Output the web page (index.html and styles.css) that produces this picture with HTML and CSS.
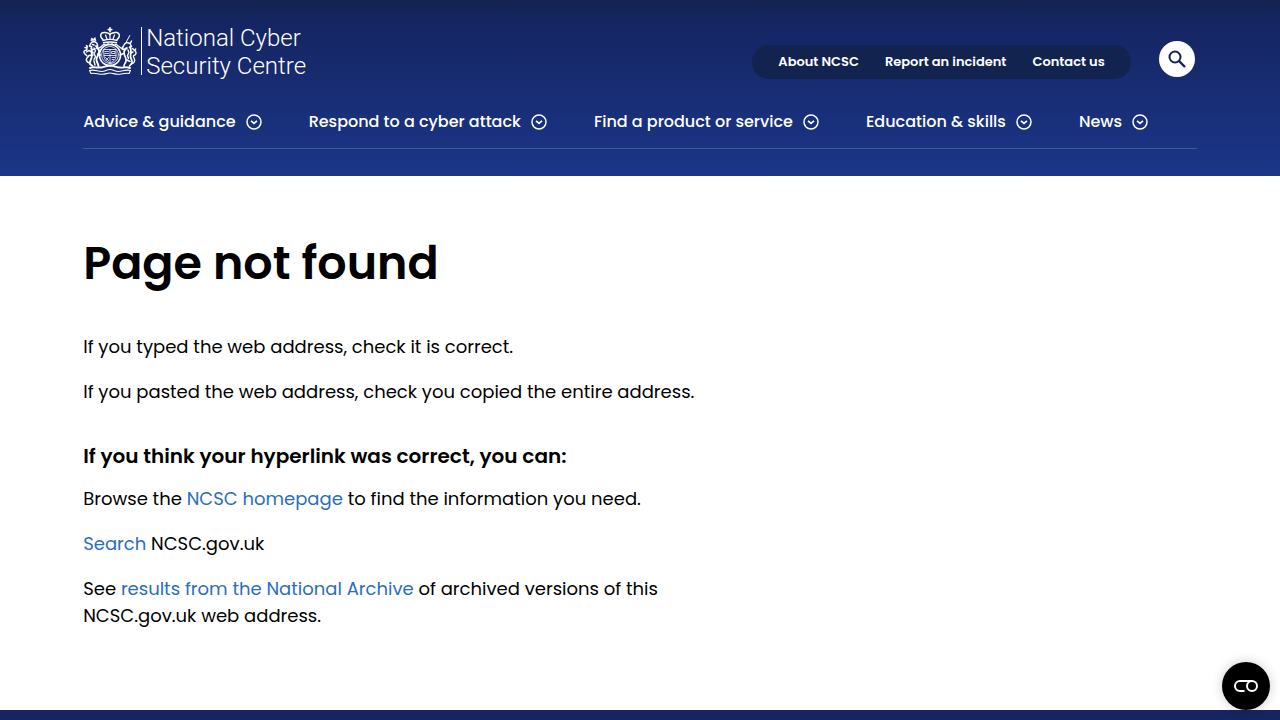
FILE: index.html
```
<!DOCTYPE html>
<html lang="en">
<head>
    <meta charset="UTF-8">
    <meta name="viewport" content="width=device-width, initial-scale=1.0">
    <title>Page not found - NCSC.GOV.UK</title>
    <link rel="stylesheet" href="styles.css">
</head>
<body>
    <!-- Shared chevron icon for the main menu -->
    <svg class="sprite" aria-hidden="true">
        <symbol id="chevron" viewBox="0 0 16 16">
            <circle cx="8" cy="8" r="7" fill="none" stroke="currentColor" stroke-width="1.5"/>
            <path d="M5 6.800l3 2.600 3-2.600" fill="none" stroke="currentColor" stroke-width="1.6"/>
        </symbol>
    </svg>

    <header class="site-header">
        <div class="container">
            <div class="header-top">
                <a class="logo" href="#" aria-label="National Cyber Security Centre">
                    <svg class="crest" viewBox="0 0 54 48" fill="none" stroke="#fff" stroke-linecap="round" stroke-linejoin="round" aria-hidden="true">
                        <!-- Crown -->
                        <path d="M27 .8v4M25.2 2.6h3.6" stroke-width="1.600"/>
                        <path d="M20 12.500c-4-3-2.500-7.500 2-7 2 .2 4.500 1.200 5 2 .5-.8 3-1.800 5-2 4.500-.5 6 4 2 7" stroke-width="1.500" stroke-dasharray="1.600 .5"/>
                        <path d="M27 7.500v5M22.500 8l1.500 4M31.500 8l-1.500 4" stroke-width="1.200"/>
                        <path d="M20 13.500c4-1.300 10-1.300 14 0M20.500 15.800c4-1 9-1 13 0" stroke-width="1.400"/>
                        <!-- Garter and shield -->
                        <ellipse cx="27" cy="28" rx="10.500" ry="10.500" stroke-width="1.700" stroke-dasharray="1.200 .8"/>
                        <ellipse cx="27" cy="28" rx="8.300" ry="8.500" stroke-width=".8" stroke-dasharray="1.500 .8"/>
                        <path d="M21 22.500h12v6.500c0 4-3 5.500-6 7-3-1.500-6-3-6-7zM27 22.500V36M21 28.500h12" stroke-width=".8"/>
                        <path d="M22 24.500h3.500M22 26.500h3.500M29 24.500h3v2h-3zM22.500 30.500l3 3M25.500 30.500l-2.500 3M29 30.500h3M29 32.500h2" stroke-width=".8"/>
                        <path d="M19 18.800l2-1.500 2 1 2-1.500 2 1 2-1 2 1.500 2-1 2 1.500" stroke-width="1.200"/>
                        <!-- Lion -->
                        <path d="M8 13.500l.5-2.500 1.800 1.300 1.700-1.800.8 3z" fill="#fff" stroke-width=".8"/>
                        <path d="M8 16c2-1.800 5-1.500 6 .5s.5 4-1 5M8 16l-1.500 3 2.200.7-.7 2.200 2.500.6M9.500 17.500l1.500.5" stroke-width="1.500"/>
                        <path d="M13 19c2.500 2 3.500 4 3 7s-3 4-2.500 7 2 4 2 6.500M9 23c-1 3 .5 5-.5 8s-2 3.500-1.500 6l2.500 2" stroke-width="1.900"/>
                        <path d="M11 21l1.500 3-1.500 2.500 1.500 3-1.500 3M14.500 22l4-2.500M14.500 27l3 1M10 25.500l-4-2-2.500 1.500M10 28l-4 .5-1.500 2M11 34l1 4" stroke-width="1.400"/>
                        <path d="M6.500 36c-3-.8-4-3-2.500-5M4 29c-1-2-3-1.500-3-4 0-1.500 1-2 2-1.500M2 20.500c2 0 2.500 1.500 1.500 3M3.500 18.500l1 1.500" stroke-width="1.500"/>
                        <!-- Unicorn -->
                        <path d="M43 15.500L46.800 8.500" stroke-width="1"/>
                        <path d="M41 18c1-2.500 4-3 6-1.500l1.500 3-2 1M40.500 19l-1.500 2.500 2 1 2-1.500M47.500 16l1-2" stroke-width="1.500"/>
                        <path d="M44 21c-3 2-3.500 4.500-2.500 7s2 3.500 1.500 6-2 3-2 5M47 20c2 3 .5 7 .5 9.500s2.500 4 1.500 6.500l-2.500 3" stroke-width="1.700"/>
                        <path d="M45 23l1 2.500-1.500 3 1 3M40 22.500l-4-3M40.500 26.500l-3.500 1.500M48 26l2-1M44 33l3 1.500" stroke-width="1.400"/>
                        <path d="M48.500 37c3-1 4-3.500 2.500-6s0-2.500 1-3c1.300-1 1.300-3 .3-4M49.500 21.500l2 2 1.200-1.500" stroke-width="1.400"/>
                        <!-- Compartment and motto -->
                        <path d="M7 41c4-1.500 7 0 10-.5 4 0 6-1.800 10-1.800s6 1.800 10 1.800c3 .5 6-1 10 .5" stroke-width="1.900" stroke-dasharray="2.500 .7"/>
                        <path d="M6.500 43.500c5-1.500 8 1 12 1s5-2 8.500-2 4.500 2 8.500 2 7-2.500 12-1l-1.500 3c-4-1-7 .8-11 .8-3.500 0-5-1.300-8-1.300s-4.500 1.300-8 1.300c-4 0-7-1.800-11-.8z" stroke-width="1.100"/>
                    </svg>
                    <span class="logo-text">National Cyber<br>Security Centre</span>
                </a>

                <div class="header-tools">
                    <nav class="quick-links" aria-label="Quick links">
                        <a href="#">About NCSC</a>
                        <a href="#">Report an incident</a>
                        <a href="#">Contact us</a>
                    </nav>
                    <button class="search-button" type="button" aria-label="Search">
                        <svg viewBox="0 0 18 18" width="18" height="18" fill="none" stroke="currentColor" stroke-width="2">
                            <circle cx="7" cy="7" r="5.500"/>
                            <path d="M11 11l6 6" stroke-width="2.400"/>
                        </svg>
                    </button>
                </div>
            </div>

            <nav class="main-nav" aria-label="Main">
                <button type="button">Advice &amp; guidance <svg class="chevron"><use href="#chevron"/></svg></button>
                <button type="button">Respond to a cyber attack <svg class="chevron"><use href="#chevron"/></svg></button>
                <button type="button">Find a product or service <svg class="chevron"><use href="#chevron"/></svg></button>
                <button type="button">Education &amp; skills <svg class="chevron"><use href="#chevron"/></svg></button>
                <button type="button">News <svg class="chevron"><use href="#chevron"/></svg></button>
            </nav>
        </div>
    </header>

    <main class="container content">
        <h1>Page not found</h1>
        <p>If you typed the web address, check it is correct.</p>
        <p>If you pasted the web address, check you copied the entire address.</p>
        <h2>If you think your hyperlink was correct, you can:</h2>
        <p>Browse the <a href="#">NCSC homepage</a> to find the information you need.</p>
        <p><a href="#">Search</a> NCSC.gov.uk</p>
        <p>See <a href="#">results from the National Archive</a> of archived versions of this NCSC.gov.uk web address.</p>
    </main>

    <footer class="site-footer"></footer>

    <button class="cookie-button" type="button" aria-label="Cookie preferences">
        <svg viewBox="0 0 26 14" width="26" height="14" fill="none" stroke="currentColor" stroke-width="2">
            <path d="M11.500 12H7A5 5 0 0 1 7 2h12"/>
            <circle cx="19" cy="7" r="5"/>
        </svg>
    </button>
</body>
</html>
```
FILE: styles.css
```
* {
    box-sizing: border-box;
}

body {
    margin: 0;
    min-height: 100vh;
    display: flex;
    flex-direction: column;
    font-family: Poppins, Inter, sans-serif;
    font-size: 18px;
    line-height: 27px;
    color: #000;
    background: #fff;
}

button {
    font: inherit;
    padding: 0;
    border: 0;
    cursor: pointer;
}

.sprite {
    display: none;
}

.container {
    width: 87%;
    margin: 0 auto;
}

/* Header */

.site-header {
    padding: 22px 0 27px;
    background: linear-gradient(#142350, #152562 12%, #1b3688);
    color: #fff;
}

.header-top {
    display: flex;
    justify-content: space-between;
    align-items: center;
}

.logo {
    display: flex;
    align-items: center;
    gap: 4px;
    color: #fff;
    text-decoration: none;
}

.crest {
    width: 59px;
    height: 48px;
    padding-right: 4px;
    border-right: 1px solid #fff;
}

.logo-text {
    padding-top: 2px;
    font-family: Roboto, sans-serif;
    font-size: 24px;
    font-weight: 300;
    line-height: 28px;
}

.header-tools {
    display: flex;
    align-items: center;
    gap: 28px;
    padding: 16px 2px 0 0;
}

.quick-links {
    display: flex;
    gap: 26px;
    margin-top: 6px;
    padding: 4px 26px;
    border-radius: 17px;
    background: #132350;
    font-size: 13px;
    font-weight: 600;
    line-height: 26px;
}

.quick-links a {
    color: #fff;
    text-decoration: none;
}

.search-button {
    display: flex;
    align-items: center;
    justify-content: center;
    width: 36px;
    height: 36px;
    border-radius: 50%;
    background: #fff;
    color: #142350;
}

.main-nav {
    display: flex;
    gap: 47px;
    margin-top: 28px;
    padding-bottom: 13px;
    border-bottom: 1px solid #435aa0;
}

.main-nav button {
    display: flex;
    align-items: center;
    gap: 10px;
    background: none;
    color: #fff;
    font-size: 16px;
    font-weight: 500;
    white-space: nowrap;
}

.chevron {
    width: 16px;
    height: 16px;
}

/* Page content */

.content {
    padding: 51px 0 63px;
}

.content h1 {
    margin: 0 0 34px;
    font-size: 46px;
    font-weight: 600;
    line-height: 72px;
}

.content h2 {
    margin: 34px 0 12px;
    font-size: 20px;
    font-weight: 600;
    line-height: 34px;
}

.content p {
    max-width: 620px;
    margin: 0 0 18px;
}

.content a {
    color: #2a6ebb;
    text-decoration: none;
}

/* Footer */

.site-footer {
    flex: 1;
    min-height: 10px;
    background: #152562;
}

.cookie-button {
    position: fixed;
    right: 10px;
    bottom: 10px;
    display: flex;
    align-items: center;
    justify-content: center;
    width: 48px;
    height: 48px;
    border-radius: 50%;
    background: #000;
    color: #fff;
    box-shadow: 0 0 12px rgba(0, 0, 0, 0.2);
}
```
